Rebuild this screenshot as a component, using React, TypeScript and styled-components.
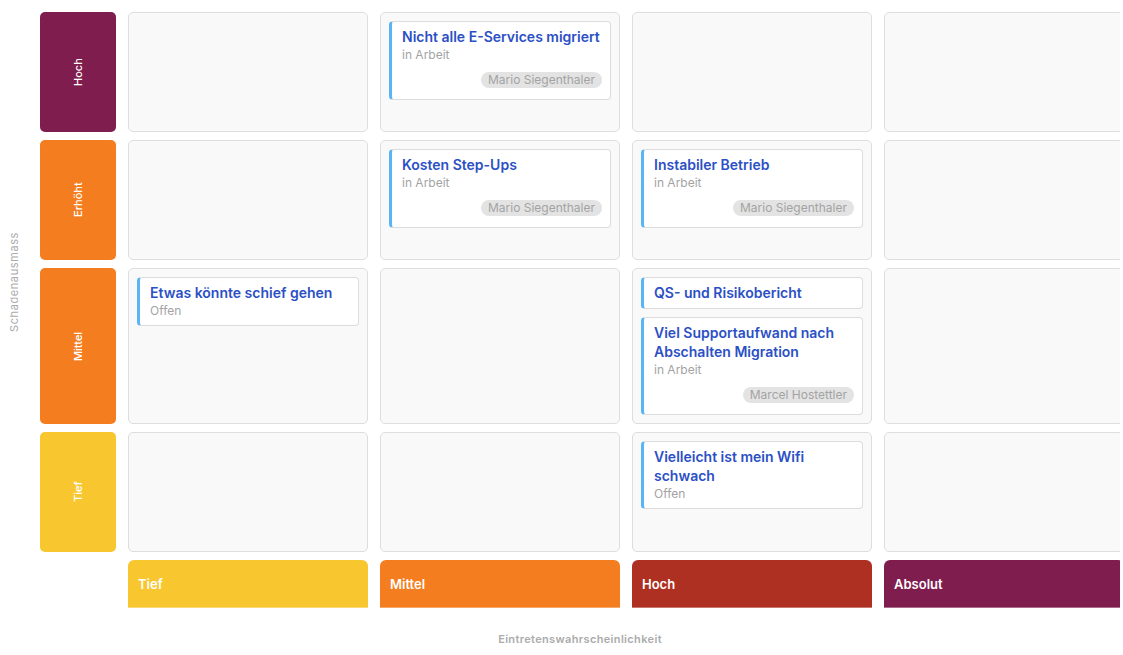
import React, { FC } from "react"
import styled, { createGlobalStyle } from "styled-components"

const GlobalStyle = createGlobalStyle`
    body {
        margin: 0;
        background: #ffffff;
        overflow: hidden;
        font-family: Inter, "Liberation Sans", sans-serif;
    }
`

type Level = "tief" | "mittel" | "erhoeht" | "hoch" | "absolut"

const levelColors: Record<Level, string> = {
    tief: "#f8c62f",
    mittel: "#f47d20",
    erhoeht: "#f47d20",
    hoch: "#ae3023",
    absolut: "#7f1d4e"
}

interface Risk {
    title: string
    status: string
    owner?: string
}

interface Row {
    label: string
    level: Level
    cells: Risk[][]
}

const rows: Row[] = [
    {
        label: "Hoch",
        level: "absolut",
        cells: [
            [],
            [{ title: "Nicht alle E-Services migriert", status: "in Arbeit", owner: "Mario Siegenthaler" }],
            [],
            []
        ]
    },
    {
        label: "Erhöht",
        level: "erhoeht",
        cells: [
            [],
            [{ title: "Kosten Step-Ups", status: "in Arbeit", owner: "Mario Siegenthaler" }],
            [{ title: "Instabiler Betrieb", status: "in Arbeit", owner: "Mario Siegenthaler" }],
            []
        ]
    },
    {
        label: "Mittel",
        level: "mittel",
        cells: [
            [{ title: "Etwas könnte schief gehen", status: "Offen" }],
            [],
            [
                { title: "QS- und Risikobericht", status: "" },
                { title: "Viel Supportaufwand nach Abschalten Migration", status: "in Arbeit", owner: "Marcel Hostettler" }
            ],
            []
        ]
    },
    {
        label: "Tief",
        level: "tief",
        cells: [
            [],
            [],
            [{ title: "Vielleicht ist mein Wifi schwach", status: "Offen" }],
            []
        ]
    }
]

const columns: { label: string; level: Level }[] = [
    { label: "Tief", level: "tief" },
    { label: "Mittel", level: "mittel" },
    { label: "Hoch", level: "hoch" },
    { label: "Absolut", level: "absolut" }
]

const Viewport = styled.div`
    width: 1120px;
    overflow: hidden;
`

const Matrix = styled.div`
    display: grid;
    grid-template-columns: 28px 76px repeat(4, 240px);
    grid-template-rows: repeat(4, minmax(120px, auto)) 48px auto;
    column-gap: 12px;
    row-gap: 8px;
    padding-top: 12px;
    width: 1124px;
`

const YAxis = styled.div`
    grid-column: 1;
    grid-row: 1 / span 4;
    display: flex;
    align-items: center;
    justify-content: center;
    writing-mode: vertical-rl;
    transform: rotate(180deg);
    color: #ababab;
    font-size: 11px;
    letter-spacing: 0.6px;
`

const XAxis = styled.div`
    grid-column: 2 / span 5;
    text-align: center;
    color: #ababab;
    font-size: 11px;
    font-weight: 600;
    letter-spacing: 0.35px;
    padding: 16px 4px 0 0;
`

const RowLabel = styled.div<{ $level: Level }>`
    grid-column: 2;
    display: flex;
    align-items: center;
    justify-content: center;
    background: ${(p) => levelColors[p.$level]};
    border-radius: 5px;
    color: #ffffff;
    font-size: 11px;
    font-weight: 500;
    writing-mode: vertical-rl;
    transform: rotate(180deg);
`

const Cell = styled.div`
    display: flex;
    flex-direction: column;
    gap: 8px;
    padding: 8px;
    background: #f9f9f9;
    border: 1px solid #dedede;
    border-radius: 5px;
`

const Card = styled.div`
    display: flex;
    flex-direction: column;
    padding: 5px 8px 6px 10px;
    background: #ffffff;
    border: 1px solid #dcdcdc;
    border-left: 3px solid #5ab5f6;
    border-radius: 4px;
`

const Title = styled.div`
    color: #2b50c5;
    font-size: 14px;
    font-weight: 600;
    line-height: 19px;
`

const Status = styled.div`
    color: #a3a3a3;
    font-size: 12px;
    line-height: 17px;
`

const Footer = styled.div`
    display: flex;
    justify-content: flex-end;
    margin: 9px 0 5px;
`

const Owner = styled.span`
    padding: 0 7px;
    background: #e3e3e3;
    border-radius: 8px;
    color: #a3a3a3;
    font-size: 12px;
    line-height: 16px;
`

const ColumnHeader = styled.div<{ $level: Level }>`
    display: flex;
    align-items: center;
    padding-left: 10px;
    background: ${(p) => levelColors[p.$level]};
    border-radius: 6px 6px 0 0;
    border-bottom: 1px solid rgba(255, 255, 255, 0.35);
    color: #ffffff;
    font-size: 13px;
    font-weight: 600;
`

const RiskCard: FC<{ risk: Risk }> = ({ risk }) => (
    <Card>
        <Title>{risk.title}</Title>
        {risk.status && <Status>{risk.status}</Status>}
        {risk.owner && (
            <Footer>
                <Owner>{risk.owner}</Owner>
            </Footer>
        )}
    </Card>
)

const App: FC = () => {
    return (
        <Viewport>
            <GlobalStyle />
            <Matrix>
                <YAxis>Schadenausmass</YAxis>
                {rows.map((row) => (
                    <React.Fragment key={row.label}>
                        <RowLabel $level={row.level}>{row.label}</RowLabel>
                        {row.cells.map((risks, i) => (
                            <Cell key={i}>
                                {risks.map((risk) => (
                                    <RiskCard key={risk.title} risk={risk} />
                                ))}
                            </Cell>
                        ))}
                    </React.Fragment>
                ))}
                <div />
                <div />
                {columns.map((col) => (
                    <ColumnHeader key={col.label} $level={col.level}>
                        {col.label}
                    </ColumnHeader>
                ))}
                <XAxis>Eintretenswahrscheinlichkeit</XAxis>
            </Matrix>
        </Viewport>
    )
}

export default App
